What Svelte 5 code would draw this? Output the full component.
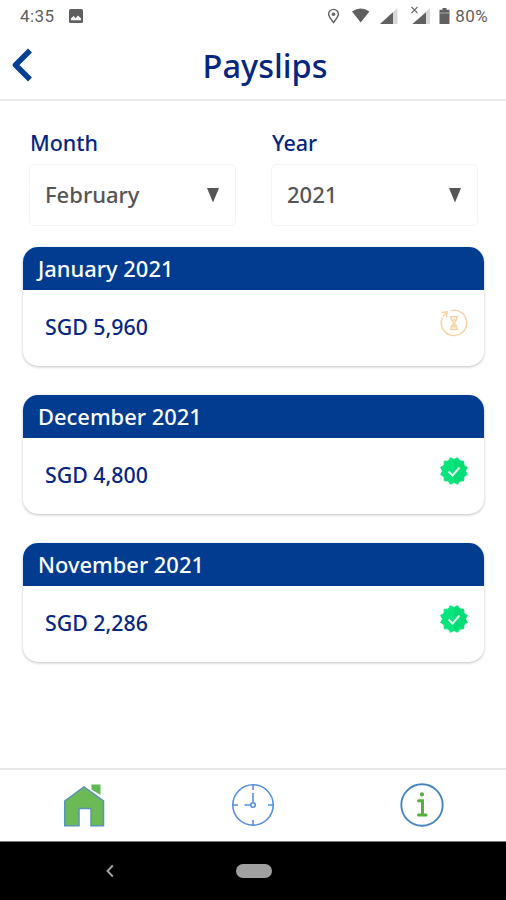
<script lang="ts">
  interface Payslip {
    period: string;
    amount: string;
    paid: boolean;
  }

  const payslips: Payslip[] = [
    { period: "January 2021", amount: "SGD 5,960", paid: false },
    { period: "December 2021", amount: "SGD 4,800", paid: true },
    { period: "November 2021", amount: "SGD 2,286", paid: true },
  ];

  const filters = [
    { label: "Month", value: "February" },
    { label: "Year", value: "2021" },
  ];

  // 12 pointed badge outline
  const badge = Array.from({ length: 24 }, (_, i) => {
    const r = i % 2 ? 13.8 : 11.4;
    const a = (i * Math.PI) / 12;
    return `${(15 + r * Math.cos(a)).toFixed(2)},${(15 + r * Math.sin(a)).toFixed(2)}`;
  }).join(" ");
</script>

<div class="screen">
  <div class="status">
    <span class="time">4:35</span>
    <svg class="photo" width="14" height="14" viewBox="0 0 14 14">
      <rect width="14" height="14" rx="1.5" fill="#606060" />
      <path d="M2 11.3V9.5L4.5 7l2.2 2.2L9 6.5l3 3v1.8z" fill="#fff" />
    </svg>
    <svg class="icons" width="126" height="24" viewBox="0 0 126 24">
      <path d="M5.500 20.500C2.300 16.400.6 14.500.6 12.300a4.900 4.900 0 0 1 9.800 0c0 2.200-1.700 4.100-4.900 8.200z" fill="none" stroke="#606060" stroke-width="1.400" />
      <circle cx="5.500" cy="12.300" r="1.800" fill="#606060" />
      <path d="M24 9.400q8.700-6 17.400 0L32.700 20.500z" fill="#606060" />
      <path d="M52 22L69.500 6v16z" fill="#d8d8d8" />
      <path d="M52 22L65 10.200V22z" fill="#606060" />
      <path d="M84.500 22L102 6v16z" fill="#d8d8d8" />
      <path d="M84.500 22L98 10.200V22z" fill="#606060" />
      <path d="M83.500 5l6 6m0-6l-6 6" stroke="#707070" stroke-width="1.200" />
      <path d="M114.500 6h4v1.700h3V22h-10V7.700h3z" fill="#606060" />
      <path d="M112 11h9" stroke="#aaa" />
    </svg>
    <span class="percent">80%</span>
  </div>

  <header>
    <svg class="back" width="24" height="36" viewBox="0 0 24 36">
      <path d="M20 3.500L5.500 18L20 32.500" fill="none" stroke="#053f91" stroke-width="5.500" stroke-linejoin="round" />
    </svg>
    <h1>Payslips</h1>
  </header>

  <main>
    <div class="filters">
      {#each filters as filter}
        <div class="filter">
          <div class="label">{filter.label}</div>
          <div class="select">
            <span>{filter.value}</span>
            <svg width="12" height="15" viewBox="0 0 12 15"><path d="M0 0h12L6 14.500z" fill="#555" /></svg>
          </div>
        </div>
      {/each}
    </div>

    {#each payslips as slip}
      <section class="card">
        <h2>{slip.period}</h2>
        <div class="body">
          <span>{slip.amount}</span>
          {#if slip.paid}
            <svg width="30" height="30" viewBox="0 0 30 30">
              <polygon points={badge} fill="#08e57d" stroke="#08e57d" stroke-width="1" stroke-linejoin="round" />
              <path d="M15 3l3-1 3 2 3 1 1 4 2 3v6l-2 3-1 4-3 1-3 1-3-1z" fill="#00d570" opacity=".5" />
              <path d="M9.500 15.500l4 4 7-8" fill="none" stroke="#dfffea" stroke-width="2" />
            </svg>
          {:else}
            <svg width="30" height="30" viewBox="0 0 30 30" fill="none" stroke="#fbd0a2" stroke-width="1.400">
              <path d="M11.500 2.700A12.700 12.700 0 1 1 3.500 9.500" />
              <path d="M2.500 4.500l5.600-.7-.6 5.500M8 4L4 8.500" />
              <path d="M10.800 8.800h8.400M10.800 21.500h8.400M12 9c0 4 1.500 4.800 3 6.200-1.500 1.400-3 2.300-3 6.300M18 9c0 4-1.500 4.800-3 6.200 1.500 1.400 3 2.300 3 6.300M13.500 19.500L15 18l1.500 1.500M13.500 12h3" />
            </svg>
          {/if}
        </div>
      </section>
    {/each}
  </main>

  <nav>
    <svg width="46" height="46" viewBox="0 0 46 46">
      <path d="M30.500 2.500h9V13l-9-5.500z" fill="#62b957" />
      <path d="M3.700 19L23 5l19.500 14V43.800H30V26.500H18v17.300H3.700z" fill="#6bba56" stroke="#5795b8" stroke-width="1.500" />
    </svg>
    <svg width="46" height="46" viewBox="0 0 46 46" fill="none" stroke="#568fdc" stroke-width="1.600">
      <circle cx="23" cy="23" r="20.200" />
      <path d="M23 3v5M23 38v5M3 23h5M38 23h5M23 11v9.500M14.500 23h6" />
      <circle cx="23" cy="23" r="2.300" />
    </svg>
    <svg width="46" height="46" viewBox="0 0 46 46" fill="none">
      <circle cx="23" cy="23" r="20.700" stroke="#4685c0" stroke-width="1.900" />
      <circle cx="23" cy="12.400" r="2.100" fill="#55b23e" />
      <path d="M19.500 18.800h4v14M19.500 33h7.500" stroke="#55b23e" stroke-width="3" stroke-linecap="round" />
    </svg>
  </nav>

  <footer>
    <svg width="10" height="14" viewBox="0 0 10 14"><path d="M7.800 1.500L2.500 7l5.300 5.500" fill="none" stroke="#a0a0a0" stroke-width="2" /></svg>
    <span class="pill"></span>
  </footer>
</div>

<style>
:global(body) {
  background: #fff;
}
.screen {
  box-sizing: border-box;
  height: 900px;
  display: flex;
  flex-direction: column;
  font-family: "Noto Sans", "Open Sans", sans-serif;
  color: #062681;
}
svg {
  display: block;
  flex: none;
}
h1, h2 {
  margin: 0;
  font-weight: 500;
}
.status {
  height: 32px;
  display: flex;
  align-items: center;
  padding: 0 18px 0 20px;
  font: 17px/32px Roboto, sans-serif;
  letter-spacing: 0.400px;
  color: #606060;
}
.time {
  width: 49px;
}
.icons {
  margin: -4px 0 0 auto;
}
.percent {
  margin-left: 1px;
}
header {
  height: 67px;
  display: flex;
  align-items: center;
  border-bottom: 2px solid #e9e9e9;
}
.back {
  margin: -1px 0 0 10px;
}
h1 {
  flex: 1;
  text-align: center;
  padding-right: 10px;
  font-size: 32.500px;
  line-height: 67px;
}
main {
  flex: 1;
  padding: 28px 22px 0 23px;
}
.filters {
  display: flex;
  gap: 35px;
  padding: 0 6px;
  margin-bottom: 21px;
}
.filter {
  width: 207px;
}
.label {
  font-size: 21.500px;
  font-weight: 500;
  line-height: 28px;
  margin-bottom: 7px;
  padding-left: 1px;
}
.select {
  box-sizing: border-box;
  height: 62px;
  display: flex;
  align-items: center;
  justify-content: space-between;
  padding: 0 16px 0 15px;
  border: 1px solid #f4f4f4;
  border-radius: 5px;
  font-size: 22px;
  font-weight: 500;
  color: #555;
}
.select span {
  margin-top: -2px;
}
.card {
  height: 119px;
  margin-bottom: 29px;
  border-radius: 15px;
  overflow: hidden;
  box-shadow: 0 1px 3px rgba(0, 0, 0, 0.25);
}
h2 {
  height: 43px;
  padding-left: 15px;
  background: #013c90;
  color: #fff;
  font-size: 21.900px;
  font-weight: 500;
  line-height: 44px;
}
.body {
  display: flex;
  align-items: center;
  justify-content: space-between;
  height: 73px;
  padding: 0 15px 0 22px;
  font-size: 21.300px;
  font-weight: 500;
}
.body svg {
  margin-top: -7px;
}
nav {
  box-sizing: border-box;
  height: 73px;
  display: flex;
  align-items: center;
  justify-content: space-around;
  padding-bottom: 1px;
  border-top: 2px solid #e7e7e7;
}
footer {
  box-sizing: border-box;
  height: 59px;
  display: flex;
  align-items: center;
  padding-left: 105px;
  background: #000;
  border-top: 1px solid #777;
}
.pill {
  width: 36px;
  height: 14px;
  margin-left: 121px;
  border-radius: 7px;
  background: #a0a0a0;
}
</style>
